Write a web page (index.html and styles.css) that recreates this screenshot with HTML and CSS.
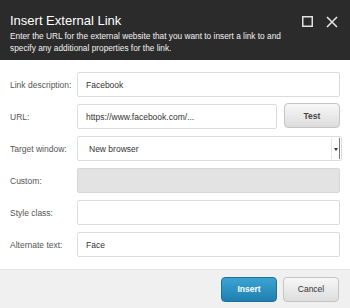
FILE: index.html
```html
<!DOCTYPE html>
<html lang="en">
<head>
    <meta charset="UTF-8">
    <title>Insert External Link</title>
    <link rel="stylesheet" href="styles.css">
</head>
<body>
    <div class="dialog">
        <div class="header">
            <div class="header-top">
                <h1 class="title">Insert External Link</h1>
                <div class="window-icons">
                    <svg width="11" height="11" viewBox="0 0 11 11">
                        <rect x="0.75" y="0.75" width="9.5" height="9.5" fill="none" stroke="#e2e2e2" stroke-width="1.5"/>
                    </svg>
                    <svg width="12" height="12" viewBox="0 0 12 12">
                        <path d="M1 1 L11 11 M11 1 L1 11" stroke="#e2e2e2" stroke-width="1.6" fill="none"/>
                    </svg>
                </div>
            </div>
            <p class="subtitle">Enter the URL for the external website that you want to insert a link to and specify any additional properties for the link.</p>
        </div>

        <div class="form">
            <label class="label">Link description:</label>
            <div class="field">Facebook</div>

            <label class="label">URL:</label>
            <div class="url-row">
                <div class="field">https://www.facebook.com/...</div>
                <button class="btn btn-test">Test</button>
            </div>

            <label class="label">Target window:</label>
            <div class="field select">
                <span class="select-text">New browser</span>
                <span class="select-arrow"></span>
            </div>

            <label class="label">Custom:</label>
            <div class="field disabled"></div>

            <label class="label">Style class:</label>
            <div class="field"></div>

            <label class="label">Alternate text:</label>
            <div class="field">Face</div>
        </div>

        <div class="footer">
            <button class="btn btn-primary">Insert</button>
            <button class="btn">Cancel</button>
        </div>
    </div>
</body>
</html>
```

FILE: styles.css
```css
body {
    margin: 0;
    font-family: 'Liberation Sans', Arial, sans-serif;
    background-color: #ffffff;
}

.dialog {
    width: 350px;
    height: 308px;
    display: flex;
    flex-direction: column;
}

.header {
    background-color: #2b2b2b;
    color: #ffffff;
    padding: 12px 10px 6px;
    height: 42px;
}

.header-top {
    display: flex;
    justify-content: space-between;
    align-items: center;
}

.title {
    margin: 0;
    font-size: 13px;
    font-weight: normal;
    line-height: 17px;
}

.window-icons {
    display: flex;
    align-items: center;
    gap: 13px;
    padding-right: 2px;
    margin-top: 2px;
}

.window-icons svg {
    display: block;
}

.subtitle {
    margin: 1px 0 0;
    max-width: 280px;
    font-size: 8.3px;
    line-height: 12px;
    color: #f2f2f2;
}

.form {
    display: grid;
    grid-template-columns: 67px 1fr;
    grid-auto-rows: 25px;
    row-gap: 7px;
    padding: 12px 10px 0;
    align-items: center;
}

.label {
    font-size: 8.5px;
    color: #555555;
}

.field {
    height: 25px;
    box-sizing: border-box;
    border: 1px solid #dcdcdc;
    border-radius: 2px;
    padding: 0 8px;
    font-size: 8.5px;
    color: #333333;
    display: flex;
    align-items: center;
    background-color: #ffffff;
}

.url-row {
    display: flex;
    gap: 7px;
}

.url-row .field {
    flex: 1;
}

.select {
    justify-content: space-between;
    padding: 0 1px 0 11px;
    margin-right: -2px;
}

.select-arrow {
    width: 7px;
    height: 21px;
    border-left: 1px solid #e6e6e6;
    border-right: 1px solid #777777;
    position: relative;
}

.select-arrow::after {
    content: '';
    position: absolute;
    left: 2px;
    top: 10px;
    border-left: 2px solid transparent;
    border-right: 2px solid transparent;
    border-top: 3px solid #333333;
}

.disabled {
    background-color: #e3e3e3;
    border-color: #d6d6d6;
}

.btn {
    width: 56px;
    height: 25px;
    border: 1px solid #c4c4c4;
    border-radius: 4px;
    background: linear-gradient(#f7f7f7, #dddddd);
    font-family: 'Liberation Sans', Arial, sans-serif;
    font-size: 8.5px;
    color: #333333;
    padding: 0;
}

.btn-test {
    margin-top: -1px;
    font-weight: bold;
    color: #444444;
}

.btn-primary {
    background: linear-gradient(#3ba3d2, #1f80b0);
    border-color: #1c719c;
    color: #ffffff;
    font-weight: bold;
}

.footer {
    margin-top: auto;
    height: 39px;
    box-sizing: border-box;
    background-color: #f0f0f0;
    border-top: 1px solid #e6e6e6;
    display: flex;
    justify-content: flex-end;
    align-items: center;
    gap: 6px;
    padding: 0 11px 0 0;
}
```
